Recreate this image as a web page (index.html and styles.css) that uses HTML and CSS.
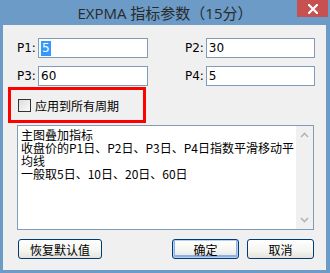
FILE: index.html
```html
<!DOCTYPE html>
<html lang="zh-CN">
<head>
  <meta charset="UTF-8">
  <title>EXPMA 指标参数</title>
  <link rel="stylesheet" href="styles.css">
</head>
<body>
  <div class="window">
    <div class="titlebar">
      <span class="title">EXPMA 指标参数（15分）</span>
      <button class="close" aria-label="关闭">
        <svg width="10" height="10" viewBox="0 0 10 10"><path d="M1 1 L9 9 M9 1 L1 9" stroke="#fff" stroke-width="2.2" stroke-linecap="square"/></svg>
      </button>
    </div>
    <div class="client">
      <div class="params">
        <div class="field"><label>P1:</label><div class="input"><span class="sel">5</span></div></div>
        <div class="field"><label>P2:</label><div class="input">30</div></div>
        <div class="field"><label>P3:</label><div class="input">60</div></div>
        <div class="field"><label>P4:</label><div class="input">5</div></div>
      </div>
      <div class="apply-all">
        <span class="check"></span>
        <span class="check-label">应用到所有周期</span>
      </div>
      <div class="memo">
        <div class="memo-text">
          <div>主图叠加指标</div>
          <div>收盘价的P1日、P2日、P3日、P4日指数平滑移动平</div>
          <div>均线</div>
          <div>一般取5日、10日、20日、60日</div>
        </div>
        <div class="scrollbar">
          <svg width="9" height="6" viewBox="0 0 9 6"><path d="M1 5 L4.5 1.5 L8 5" fill="none" stroke="#b4b4b4" stroke-width="1.6"/></svg>
          <svg width="9" height="6" viewBox="0 0 9 6"><path d="M1 1 L4.5 4.5 L8 1" fill="none" stroke="#b4b4b4" stroke-width="1.6"/></svg>
        </div>
      </div>
      <div class="buttons">
        <button class="btn btn-wide">恢复默认值</button>
        <span class="spacer"></span>
        <button class="btn default">确定</button>
        <button class="btn">取消</button>
      </div>
    </div>
  </div>
</body>
</html>
```

FILE: styles.css
```css
body {
  margin: 0;
  background: #6b9bc6;
  font-family: "DejaVu Sans", "Noto Sans CJK SC", sans-serif;
  font-size: 12px;
  color: #000;
}
.window {
  width: 330px;
  height: 273px;
  display: flex;
  flex-direction: column;
}
.titlebar {
  position: relative;
  height: 25px;
  display: flex;
  align-items: center;
  justify-content: center;
}
.title {
  font-family: "Open Sans", "Noto Sans CJK SC", sans-serif;
  font-size: 15px;
  color: #2a2a2a;
  margin-top: -1px;
}
.close {
  position: absolute;
  top: 0;
  right: 2px;
  width: 31px;
  height: 17px;
  border: 0;
  padding: 0;
  background: #c75050;
  display: flex;
  align-items: center;
  justify-content: center;
}
.client {
  flex: 1;
  margin: 0 4px 3px 3px;
  background: #f0f0f0;
  display: flex;
  flex-direction: column;
}
.params {
  display: grid;
  grid-template-columns: 168px 130px;
  row-gap: 8px;
  margin: 13px 0 0 14px;
}
.field { display: flex; align-items: center; }
.field label { width: 21px; }
.input {
  box-sizing: border-box;
  width: 110px;
  height: 20px;
  border: 1px solid #7f9db9;
  background: #fff;
  padding: 0 0 0 2px;
  display: flex;
  align-items: center;
}
.sel {
  background: #3399ff;
  color: #fff;
  padding: 0 1px;
  line-height: 15px;
}
.apply-all {
  box-sizing: border-box;
  width: 138px;
  height: 36px;
  margin: 1px 0 0 5px;
  border: 3px solid #ff0000;
  padding-left: 7px;
  display: flex;
  align-items: center;
  gap: 4px;
}
.check {
  box-sizing: border-box;
  width: 13px;
  height: 13px;
  border: 1px solid #333;
  background: linear-gradient(135deg, #dcdcdc, #fafafa);
}
.check-label { font-family: "Noto Sans CJK SC", sans-serif; }
.memo {
  box-sizing: border-box;
  width: 297px;
  height: 105px;
  margin: 2px 0 0 14px;
  border: 1px solid #7f9db9;
  background: #fff;
  display: flex;
}
.memo-text {
  flex: 1;
  padding: 2px 0 0 3px;
  line-height: 13px;
  white-space: nowrap;
  font-family: "Noto Sans CJK SC", sans-serif;
}
.scrollbar {
  width: 17px;
  background: #f0f0f0;
  display: flex;
  flex-direction: column;
  align-items: center;
  justify-content: space-between;
  padding: 6px 0 6px;
}
.buttons {
  display: flex;
  gap: 8px;
  margin: 9px 0 0 15px;
  width: 296px;
}
.spacer { flex: 1; }
.btn {
  box-sizing: border-box;
  width: 67px;
  height: 20px;
  padding: 0;
  border: 1px solid #003c74;
  border-radius: 3px;
  background: linear-gradient(#ffffff, #f4f4f0 60%, #e4e3dc);
  font-family: "Noto Sans CJK SC", sans-serif;
  font-size: 12px;
  color: #000;
}
.btn-wide { width: 84px; }
.default { box-shadow: inset 0 0 0 1px #b8d0f2, inset 0 -1px 0 2px #8cb0e6; }
```
